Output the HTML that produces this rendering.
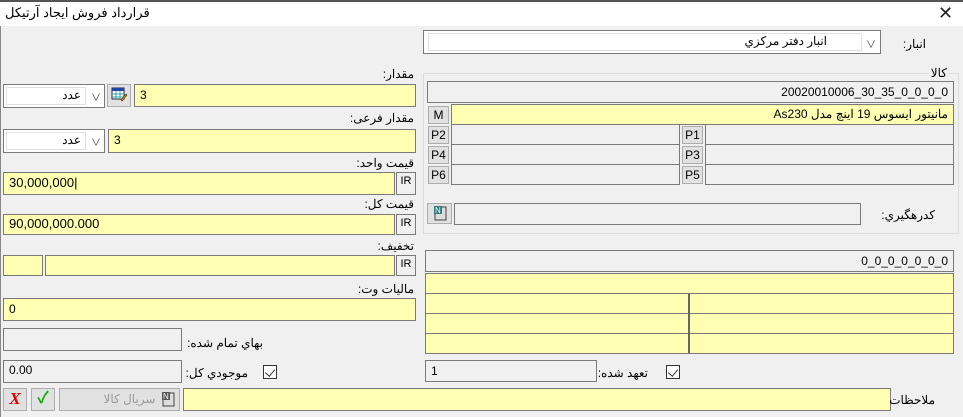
<!DOCTYPE html>
<html><head><meta charset="utf-8"><style>
*{box-sizing:border-box;margin:0;padding:0}
body{width:963px;height:417px;overflow:hidden;background:#f0f0f0;position:relative;font-family:"Liberation Sans","Noto Sans CJK SC",sans-serif;font-size:12px;color:#000}
.a{position:absolute}
.f{position:absolute;border:1px solid #7a7a7a;background:#ffffb4;padding:0 5px;line-height:20px;white-space:nowrap}
.g{background:#f0f0f0}
.w{background:#fff}
.r{text-align:right;direction:rtl}
.l{position:absolute;direction:rtl;white-space:nowrap;font-size:12px}
.b{position:absolute;background:#e1e1e1;border:1px solid #adadad;text-align:center;line-height:16px;font-size:12px}
.ir{position:absolute;background:#f0f0f0;border:1px solid #7a7a7a;text-align:center;font-size:11px;line-height:16px}
.cb{position:absolute;border:1px solid #333;background:#fff;width:14px;height:14px}
.cb:after{content:"";position:absolute;left:3px;top:1px;width:5px;height:8px;border:solid #333;border-width:0 1.5px 1.5px 0;transform:rotate(40deg)}
</style></head><body>
<div class="a" style="left:0;top:0;width:963px;height:2px;background:#555"></div>
<div class="a" style="left:0;top:2px;width:963px;height:24px;background:#fff"></div>
<div class="l" style="left:5px;top:5px;font-size:13px">قرارداد فروش ايجاد آرتيكل</div>
<div class="a" style="left:938px;top:4px;font-size:18px;line-height:18px;color:#222">✕</div>
<div class="a" style="left:0;top:26px;width:1px;height:391px;background:#888"></div>

<div class="f w" style="left:423px;top:30px;width:458px;height:24px;padding:0"></div>
<div class="a" style="left:428px;top:33px;width:434px;height:18px;background:#fff;border:1px solid #e0e0e0"></div>
<div class="l" style="right:136px;top:34px">انبار دفتر مرکزي</div>
<div class="a" style="left:866px;top:36px;font-size:10px;color:#444">∨</div>
<div class="l" style="right:37px;top:37px">انبار:</div>

<div class="a" style="left:423px;top:73px;width:536px;height:161px;border:1px solid #dcdcdc"></div>
<div class="l" style="right:14px;top:66px;background:#f0f0f0;padding:0 2px">كالا</div>
<div class="f g" style="left:427px;top:81px;width:527px;height:22px;text-align:right">20020010006_30_35_0_0_0_0</div>
<div class="b" style="left:428px;top:106px;width:21px;height:18px">M</div>
<div class="f r" style="left:451px;top:104px;width:503px;height:21px;line-height:18px">مانيتور ايسوس 19 اينچ مدل As230</div>
<div class="b" style="left:428px;top:126px;width:21px;height:18px">P2</div>
<div class="f g" style="left:451px;top:124px;width:229px;height:21px"></div>
<div class="b" style="left:682px;top:126px;width:21px;height:18px">P1</div>
<div class="f g" style="left:705px;top:124px;width:249px;height:21px"></div>
<div class="b" style="left:428px;top:146px;width:21px;height:18px">P4</div>
<div class="f g" style="left:451px;top:144px;width:229px;height:21px"></div>
<div class="b" style="left:682px;top:146px;width:21px;height:18px">P3</div>
<div class="f g" style="left:705px;top:144px;width:249px;height:21px"></div>
<div class="b" style="left:428px;top:166px;width:21px;height:18px">P6</div>
<div class="f g" style="left:451px;top:164px;width:229px;height:21px"></div>
<div class="b" style="left:682px;top:166px;width:21px;height:18px">P5</div>
<div class="f g" style="left:705px;top:164px;width:249px;height:21px"></div>
<div class="b" style="left:427px;top:203px;width:25px;height:21px"><svg width="16" height="16" style="margin-top:1px" viewBox="0 0 16 16"><rect x="3" y="2" width="11" height="13" fill="#ddd" stroke="#444"/><rect x="2" y="1" width="8" height="8" fill="#2a7a7a"/><text x="3" y="8" font-size="8" fill="#fff" font-family="Liberation Sans">N</text></svg></div>
<div class="f g" style="left:454px;top:203px;width:407px;height:22px"></div>
<div class="l" style="right:28px;top:208px">كدرهگيري:</div>

<div class="f g" style="left:425px;top:250px;width:529px;height:22px;text-align:right">0_0_0_0_0_0_0</div>
<div class="f" style="left:425px;top:273px;width:529px;height:81px;padding:0"></div>
<div class="a" style="left:426px;top:293px;width:527px;height:1px;background:#7a7a7a"></div>
<div class="a" style="left:426px;top:313px;width:527px;height:1px;background:#7a7a7a"></div>
<div class="a" style="left:426px;top:333px;width:527px;height:1px;background:#7a7a7a"></div>
<div class="a" style="left:688px;top:294px;width:2px;height:59px;background:#666"></div>
<div class="cb" style="left:666px;top:365px"></div>
<div class="l" style="right:315px;top:366px">تعهد شده:</div>
<div class="f g" style="left:425px;top:360px;width:172px;height:22px">1</div>
<div class="f" style="left:183px;top:388px;width:708px;height:23px"></div>
<div class="l" style="right:28px;top:393px">ملاحظات</div>

<div class="l" style="right:549px;top:67px">مقدار:</div>
<div class="f w" style="left:3px;top:84px;width:102px;height:24px;padding:0"></div>
<div class="a" style="left:6px;top:87px;width:80px;height:18px;border:1px solid #e0e0e0"></div>
<div class="l" style="right:882px;top:88px">عدد</div>
<div class="a" style="left:91px;top:89px;font-size:10px;color:#444">∨</div>
<div class="b" style="left:107px;top:84px;width:24px;height:23px"><svg width="18" height="17" viewBox="0 0 18 17" style="margin-top:2px"><rect x="2" y="1" width="12" height="11" fill="#fff" stroke="#224"/><rect x="2" y="1" width="12" height="3" fill="#2244aa"/><path d="M2 7h12M2 10h12M6 4v8M10 4v8" stroke="#3aa" /><path d="M11 13l5-6 1 1-5 6z" fill="#d90" stroke="#530" stroke-width=".6"/></svg></div>
<div class="f" style="left:134px;top:84px;width:282px;height:23px">3</div>
<div class="l" style="right:549px;top:111px">مقدار فرعی:</div>
<div class="f w" style="left:3px;top:129px;width:102px;height:24px;padding:0"></div>
<div class="a" style="left:6px;top:132px;width:80px;height:18px;border:1px solid #e0e0e0"></div>
<div class="l" style="right:882px;top:133px">عدد</div>
<div class="a" style="left:91px;top:134px;font-size:10px;color:#444">∨</div>
<div class="f" style="left:108px;top:129px;width:308px;height:24px">3</div>
<div class="l" style="right:549px;top:156px">قيمت واحد:</div>
<div class="f" style="left:3px;top:172px;width:392px;height:23px;font-size:13px">30,000,000|</div>
<div class="ir" style="left:396px;top:172px;width:20px;height:23px">IR<br></div>
<div class="l" style="right:549px;top:197px">قيمت كل:</div>
<div class="f" style="left:3px;top:214px;width:392px;height:21px;font-size:13px;line-height:18px">90,000,000.000</div>
<div class="ir" style="left:396px;top:214px;width:20px;height:21px">IR</div>
<div class="l" style="right:549px;top:239px">تخفيف:</div>
<div class="f" style="left:3px;top:255px;width:40px;height:21px"></div>
<div class="f" style="left:45px;top:255px;width:350px;height:21px"></div>
<div class="ir" style="left:396px;top:255px;width:20px;height:21px">IR</div>
<div class="l" style="right:549px;top:282px">ماليات وت:</div>
<div class="f" style="left:3px;top:298px;width:413px;height:23px">0</div>
<div class="f g" style="left:3px;top:328px;width:179px;height:23px"></div>
<div class="l" style="right:700px;top:336px">بهاي تمام شده:</div>
<div class="f g" style="left:3px;top:360px;width:179px;height:23px;line-height:18px">0.00</div>
<div class="l" style="right:715px;top:366px">موجودي كل:</div>
<div class="cb" style="left:263px;top:365px"></div>
<div class="b" style="left:3px;top:388px;width:24px;height:23px;color:#d00;font-weight:bold;font-style:italic;font-size:17px;line-height:20px;font-family:'Liberation Serif',serif">X</div>
<div class="b" style="left:31px;top:388px;width:24px;height:23px;color:#1a1;font-weight:bold;font-size:16px;line-height:20px">✓</div>
<div class="b" style="left:59px;top:388px;width:121px;height:23px;color:#999;line-height:20px;direction:rtl;padding-left:20px">سريال كالا</div>
<div class="a" style="left:161px;top:392px"><svg width="14" height="15" viewBox="0 0 14 15"><rect x="2" y="1" width="11" height="13" fill="#ddd" stroke="#444"/><rect x="1" y="0" width="8" height="8" fill="#555"/><text x="2" y="7" font-size="8" fill="#fff" font-family="Liberation Sans">N</text></svg></div>
</body></html>
